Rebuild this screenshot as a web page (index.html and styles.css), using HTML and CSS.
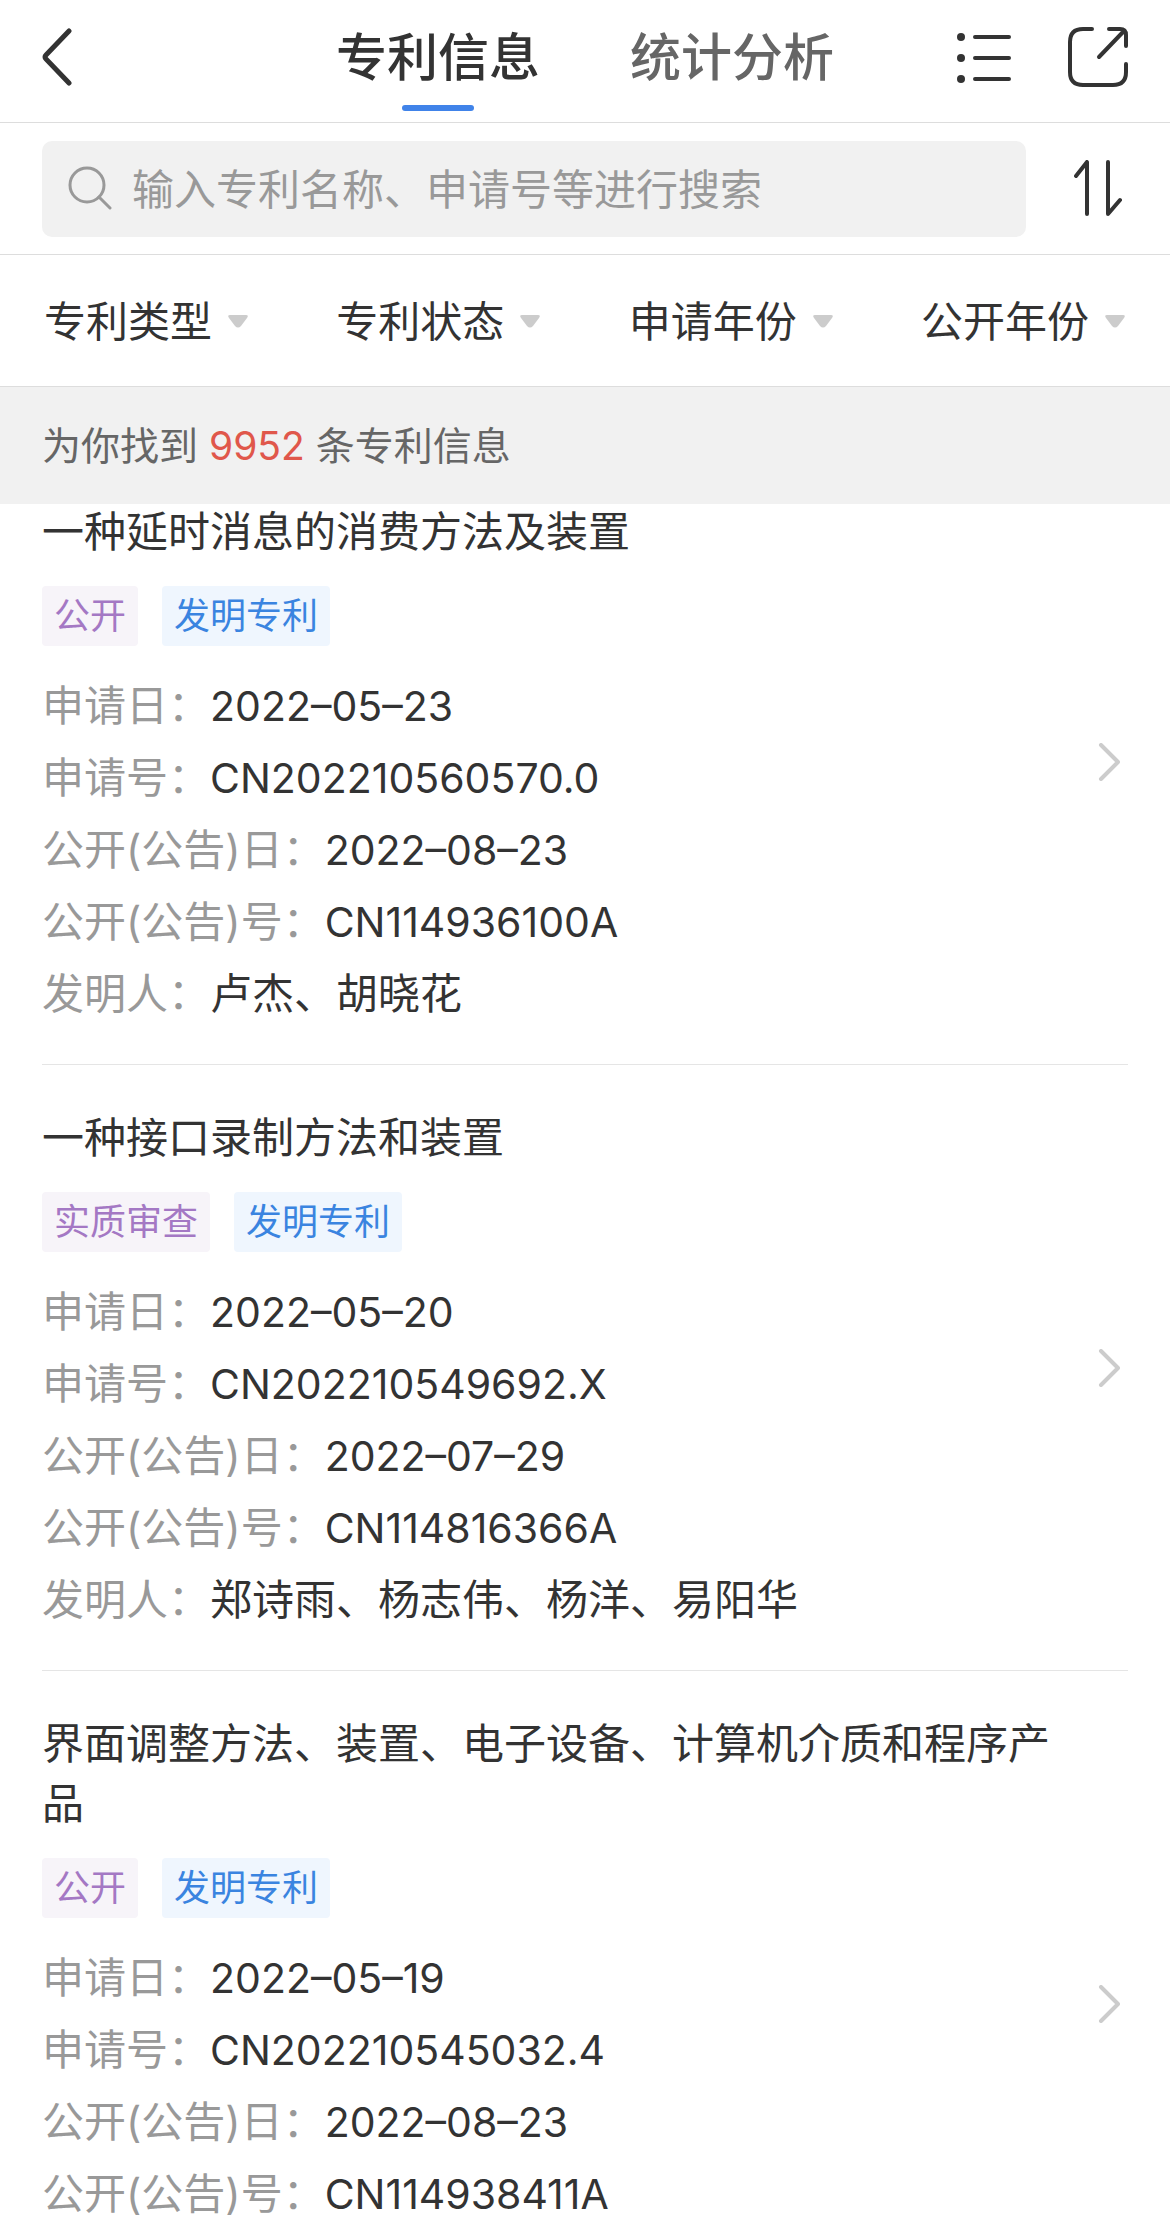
FILE: index.html
```html
<!DOCTYPE html>
<html lang="zh-CN">

<head>
    <meta charset="UTF-8">
    <meta name="viewport" content="width=device-width, initial-scale=1.0">
    <title>专利信息</title>
    <link rel="stylesheet" href="styles.css">
</head>

<body>
    <div class="top">
        <header class="navbar">
            <div class="nav-side">
                <button class="icon-btn" type="button" aria-label="返回">
                    <svg width="30" height="58" viewBox="0 0 30 58"><path d="M27 3L4 27Q2 29 4 31L27 55" /></svg>
                </button>
            </div>
            <nav class="tabs">
                <a class="tab active" href="#info">专利信息</a>
                <a class="tab" href="#stats">统计分析</a>
            </nav>
            <div class="nav-side nav-right">
                <button class="icon-btn" type="button" aria-label="目录">
                    <svg width="56" height="60" viewBox="0 0 56 60">
                        <g class="dots">
                            <circle cx="5" cy="10" r="4" />
                            <circle cx="5" cy="31" r="4" />
                            <circle cx="5" cy="52" r="4" />
                        </g>
                        <path d="M19 10H53M19 31H53M19 52H53" />
                    </svg>
                </button>
                <button class="icon-btn" type="button" aria-label="分享">
                    <svg width="60" height="60" viewBox="0 0 60 60">
                        <path d="M24 2H15Q2 2 2 15V45Q2 58 15 58H45Q58 58 58 45V37" />
                        <path d="M41 2H52Q58 2 58 8V19M55 5L31 30" />
                    </svg>
                </button>
            </div>
        </header>

        <form class="search-bar">
            <label class="search-box">
                <svg width="44" height="46" viewBox="0 0 44 46"><circle cx="19" cy="19" r="17" /><path d="M31 31L42 42" /></svg>
                <input type="search" placeholder="输入专利名称、申请号等进行搜索" aria-label="搜索专利">
            </label>
            <button class="icon-btn sort" type="button" aria-label="排序">
                <svg width="50" height="58" viewBox="0 0 50 58"><path d="M3 16L14 2V54M35 2V54L47 40" /></svg>
            </button>
        </form>

        <div class="filters">
            <label class="filter">
                <select aria-label="专利类型"><option>专利类型</option></select>
                <svg width="22" height="14" viewBox="0 0 22 14"><path d="M3 0H19Q22 0 20 3L14 11Q11 14 8 11L2 3Q0 0 3 0Z" /></svg>
            </label>
            <label class="filter">
                <select aria-label="专利状态"><option>专利状态</option></select>
                <svg width="22" height="14" viewBox="0 0 22 14"><path d="M3 0H19Q22 0 20 3L14 11Q11 14 8 11L2 3Q0 0 3 0Z" /></svg>
            </label>
            <label class="filter">
                <select aria-label="申请年份"><option>申请年份</option></select>
                <svg width="22" height="14" viewBox="0 0 22 14"><path d="M3 0H19Q22 0 20 3L14 11Q11 14 8 11L2 3Q0 0 3 0Z" /></svg>
            </label>
            <label class="filter">
                <select aria-label="公开年份"><option>公开年份</option></select>
                <svg width="22" height="14" viewBox="0 0 22 14"><path d="M3 0H19Q22 0 20 3L14 11Q11 14 8 11L2 3Q0 0 3 0Z" /></svg>
            </label>
        </div>

        <p class="summary">为你找到 <span class="count">9952</span> 条专利信息</p>
    </div>

    <main class="list">
        <article class="patent">
            <div class="patent-body">
                <h2>一种延时消息的消费方法及装置</h2>
                <div class="tags">
                    <span class="tag status">公开</span>
                    <span class="tag type">发明专利</span>
                </div>
                <dl>
                    <div><dt>申请日：</dt><dd class="num">2022–05–23</dd></div>
                    <div><dt>申请号：</dt><dd class="num">CN202210560570.0</dd></div>
                    <div><dt>公开(公告)日：</dt><dd class="num">2022–08–23</dd></div>
                    <div><dt>公开(公告)号：</dt><dd class="num">CN114936100A</dd></div>
                    <div><dt>发明人：</dt><dd>卢杰、胡晓花</dd></div>
                </dl>
            </div>
            <svg class="arrow" width="22" height="38" viewBox="0 0 22 38"><path d="M3 2L20 19L3 36" /></svg>
        </article>

        <article class="patent">
            <div class="patent-body">
                <h2>一种接口录制方法和装置</h2>
                <div class="tags">
                    <span class="tag status">实质审查</span>
                    <span class="tag type">发明专利</span>
                </div>
                <dl>
                    <div><dt>申请日：</dt><dd class="num">2022–05–20</dd></div>
                    <div><dt>申请号：</dt><dd class="num">CN202210549692.X</dd></div>
                    <div><dt>公开(公告)日：</dt><dd class="num">2022–07–29</dd></div>
                    <div><dt>公开(公告)号：</dt><dd class="num">CN114816366A</dd></div>
                    <div><dt>发明人：</dt><dd>郑诗雨、杨志伟、杨洋、易阳华</dd></div>
                </dl>
            </div>
            <svg class="arrow" width="22" height="38" viewBox="0 0 22 38"><path d="M3 2L20 19L3 36" /></svg>
        </article>

        <article class="patent">
            <div class="patent-body">
                <h2>界面调整方法、装置、电子设备、计算机介质和程序产品</h2>
                <div class="tags">
                    <span class="tag status">公开</span>
                    <span class="tag type">发明专利</span>
                </div>
                <dl>
                    <div><dt>申请日：</dt><dd class="num">2022–05–19</dd></div>
                    <div><dt>申请号：</dt><dd class="num">CN202210545032.4</dd></div>
                    <div><dt>公开(公告)日：</dt><dd class="num">2022–08–23</dd></div>
                    <div><dt>公开(公告)号：</dt><dd class="num">CN114938411A</dd></div>
                </dl>
            </div>
            <svg class="arrow" width="22" height="38" viewBox="0 0 22 38"><path d="M3 2L20 19L3 36" /></svg>
        </article>
    </main>
</body>

</html>
```

FILE: styles.css
```css
* {
    box-sizing: border-box;
}

body {
    margin: 0;
    height: 100vh;
    display: flex;
    flex-direction: column;
    overflow: hidden;
    background-color: #fff;
    color: #333;
    font-family: Inter, "Noto Sans CJK SC", sans-serif;
    font-size: 42px;
}

svg {
    display: block;
    flex: none;
    fill: none;
    stroke: #333;
    stroke-width: 5;
    stroke-linecap: round;
    stroke-linejoin: round;
}

.icon-btn {
    padding: 0;
    border: none;
    background: none;
    cursor: pointer;
}

/* 顶部固定区域 */
.top {
    position: relative;
    z-index: 1;
    flex: none;
    background-color: #fff;
}

.navbar {
    display: flex;
    padding: 0 42px;
    height: 123px;
    border-bottom: 1px solid #ddd;
}

.nav-side {
    flex: 1;
    display: flex;
    align-items: center;
    padding-bottom: 8px;
}

.nav-right {
    justify-content: flex-end;
    gap: 56px;
}

.nav-right svg {
    stroke-width: 4;
}

.nav-right .dots {
    fill: #333;
    stroke: none;
}

.tabs {
    display: flex;
    gap: 90px;
}

.tab {
    display: flex;
    flex-direction: column;
    align-items: center;
    justify-content: space-between;
    padding: 20px 0 11px;
    color: #666;
    font-size: 51px;
    font-weight: 500;
    line-height: 76px;
    text-decoration: none;
}

.tab.active {
    color: #333;
}

.tab.active::after {
    content: "";
    width: 72px;
    height: 6px;
    border-radius: 3px;
    background-color: #4083e9;
}

.search-bar {
    display: flex;
    align-items: center;
    gap: 47px;
    padding: 18px 47px 17px 42px;
    border-bottom: 1px solid #ddd;
}

.search-box {
    flex: 1;
    display: flex;
    align-items: center;
    gap: 20px;
    height: 96px;
    padding: 0 26px;
    border-radius: 10px;
    background-color: #f1f1f1;
}

.search-box svg {
    stroke: #999;
    stroke-width: 3;
}

.search-box input {
    flex: 1;
    min-width: 0;
    padding: 0;
    border: none;
    outline: none;
    background: none;
    color: #333;
    font: inherit;
}

.search-box input::placeholder {
    color: #999;
    opacity: 1;
}

.sort svg {
    stroke-width: 4;
}

.filters {
    display: flex;
    justify-content: space-between;
    padding: 31px 44px 29px;
    border-bottom: 1px solid #ddd;
}

.filter {
    display: flex;
    align-items: center;
    gap: 14px;
}

.filter select {
    appearance: none;
    padding: 0;
    border: none;
    outline: none;
    background: none;
    color: #333;
    font: inherit;
    line-height: 71px;
}

.filter svg {
    fill: #ccc;
    stroke: none;
    pointer-events: none;
}

.summary {
    margin: 0;
    padding: 0 42px;
    background-color: #f1f1f1;
    color: #666;
    font-size: 39px;
    line-height: 117px;
}

.count {
    color: #e0574b;
}

/* 列表滚动到顶部区域之下 */
.list {
    flex: 1;
    min-height: 0;
    margin-top: -45px;
    padding: 0 42px;
    overflow: hidden auto;
    scrollbar-width: none;
}

.patent {
    display: flex;
    align-items: center;
    justify-content: space-between;
    padding-right: 8px;
    border-bottom: 1px solid #e5e5e5;
}

.patent-body {
    flex: 1;
    padding: 43px 35px 34px 0;
}

.patent:last-child .patent-body {
    padding-bottom: 106px;
}

.patent h2 {
    margin: 0;
    font-size: 42px;
    font-weight: 400;
    line-height: 60px;
}

.tags {
    display: flex;
    gap: 24px;
    margin: 24px 0;
}

.tag {
    padding: 0 12px;
    border-radius: 4px;
    font-size: 36px;
    line-height: 60px;
}

.status {
    background-color: #f7f4f9;
    color: #a478c4;
}

.type {
    background-color: #eff6fe;
    color: #3a84e0;
}

.patent dl {
    margin: 0;
}

.patent dl div {
    display: flex;
    line-height: 72px;
}

.patent dt {
    color: #999;
}

.patent dd {
    margin: 0;
}

.patent .num {
    font-size: 41px;
}

.arrow {
    stroke: #ccc;
    stroke-width: 4;
}
```
